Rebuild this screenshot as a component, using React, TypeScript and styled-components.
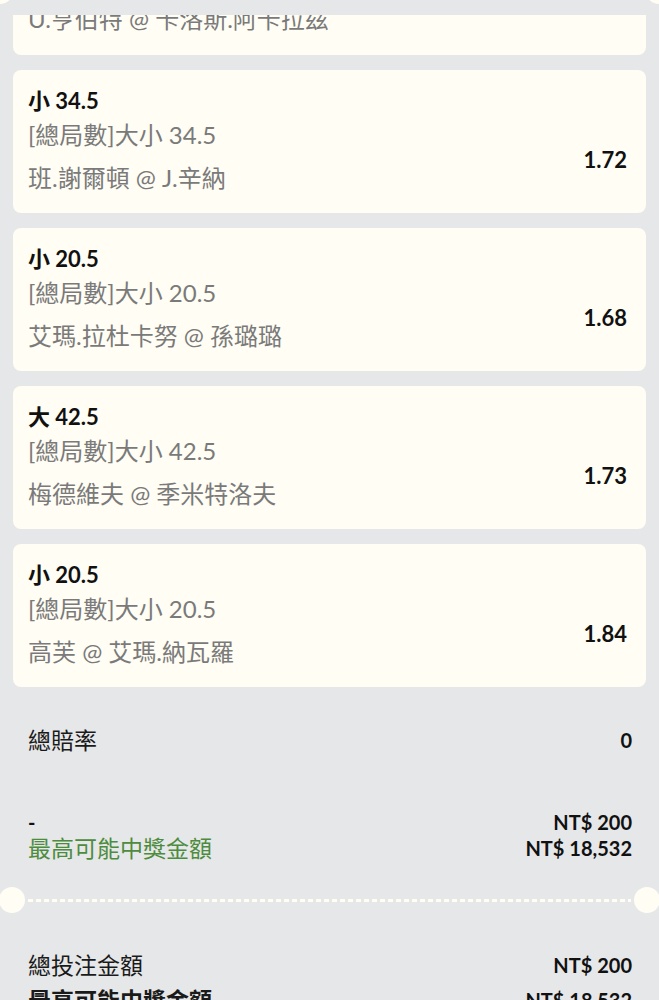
import styled, { createGlobalStyle } from "styled-components";

const GlobalStyle = createGlobalStyle`
  html, body {
    margin: 0;
    padding: 0;
    background: #e6e7e9;
    font-family: Lato, "Noto Sans CJK TC", sans-serif;
  }
`;

const Page = styled.div`
  width: 659px;
  height: 1000px;
  overflow: hidden;
  background: #e6e7e9;
  position: relative;
`;

// 上方的票券缺口列
const TopBand = styled.div`
  position: absolute;
  top: 0;
  left: 0;
  right: 0;
  height: 15px;
  background: #e6e7e9;
  overflow: hidden;
  z-index: 2;
`;

const Notch = styled.div<{ $side: "left" | "right" }>`
  position: absolute;
  top: -22px;
  ${(p) => (p.$side === "left" ? "left: -13px;" : "right: -13px;")}
  width: 26px;
  height: 26px;
  border-radius: 50%;
  background: #fffdf4;
`;

const List = styled.div`
  display: flex;
  flex-direction: column;
  gap: 15px;
  padding: 0 13px;
`;

const ClippedCard = styled.div`
  height: 55px;
  overflow: hidden;
  display: flex;
  flex-direction: column;
  justify-content: flex-end;
  background: #fffdf4;
  border-radius: 0 0 8px 8px;
`;

const Card = styled.div`
  height: 143px;
  box-sizing: border-box;
  background: #fffdf4;
  border-radius: 8px;
  padding: 15px 19px 0 15px;
  display: flex;
  align-items: center;
`;

const Info = styled.div`
  flex: 1;
  display: flex;
  flex-direction: column;
  align-self: flex-start;
`;

const Pick = styled.div`
  font-size: 22px;
  font-weight: 700;
  line-height: 32px;
  color: #111;
`;

const Market = styled.div`
  font-size: 24px;
  line-height: 36px;
  color: #7a7a7a;
`;

const Match = styled.div<{ $tail?: boolean }>`
  margin-top: 8px;
  font-size: 24px;
  line-height: 34px;
  color: #7a7a7a;
  padding: ${(p) => (p.$tail ? "0 15px 19px" : "0")};
`;

const Odds = styled.div`
  font-size: 22px;
  font-weight: 700;
  color: #111;
  margin-top: 20px;
`;

const Summary = styled.div`
  display: flex;
  flex-direction: column;
  padding: 39px 27px 0 28px;
`;

const Row = styled.div<{ $gap?: number }>`
  display: flex;
  justify-content: space-between;
  align-items: center;
  margin-top: ${(p) => p.$gap ?? 0}px;
`;

const Label = styled.div<{ $tone?: "green" | "bold" }>`
  font-size: 23px;
  line-height: 28px;
  color: ${(p) => (p.$tone === "green" ? "#4d8c3d" : "#1a1a1a")};
  font-weight: ${(p) => (p.$tone === "bold" ? 700 : 400)};
`;

const Stack = styled.div<{ $align?: "right" }>`
  display: flex;
  flex-direction: column;
  text-align: ${(p) => p.$align ?? "left"};
`;

const Line = styled.div<{ $tone?: "green" | "bold" }>`
  font-size: ${(p) => (p.$tone === "green" ? 23 : 20)}px;
  line-height: 26px;
  color: ${(p) => (p.$tone === "green" ? "#4d8c3d" : "#111")};
  font-weight: ${(p) => (p.$tone === "bold" ? 700 : 400)};
`;

const Amount = styled.div`
  font-size: 20px;
  line-height: 28px;
  font-weight: 700;
  color: #111;
`;

const Divider = styled.div`
  display: flex;
  align-items: center;
  margin: 26px 0 38px;
`;

const Hole = styled.div<{ $side: "left" | "right" }>`
  width: 26px;
  height: 26px;
  border-radius: 50%;
  background: #fffdf4;
  flex-shrink: 0;
  margin-${(p) => p.$side}: -1px;
`;

const Dashes = styled.div`
  flex: 1;
  height: 3px;
  margin: 0 3px;
  background: repeating-linear-gradient(
    to right,
    #fffdf4 0 5px,
    transparent 5px 8px
  );
`;

const Footer = styled.div`
  display: flex;
  flex-direction: column;
  gap: 7px;
  padding: 0 27px 0 28px;
`;

const bets = [
  { pick: "小 34.5", market: "[總局數]大小 34.5", match: "班.謝爾頓 @ J.辛納", odds: "1.72" },
  { pick: "小 20.5", market: "[總局數]大小 20.5", match: "艾瑪.拉杜卡努 @ 孫璐璐", odds: "1.68" },
  { pick: "大 42.5", market: "[總局數]大小 42.5", match: "梅德維夫 @ 季米特洛夫", odds: "1.73" },
  { pick: "小 20.5", market: "[總局數]大小 20.5", match: "高芙 @ 艾瑪.納瓦羅", odds: "1.84" },
];

export default function App() {
  return (
    <Page>
      <GlobalStyle />
      <TopBand>
        <Notch $side="left" />
        <Notch $side="right" />
      </TopBand>
      <List>
        {/* 被捲出畫面的第一張注單 */}
        <ClippedCard>
          <Match $tail>U.亨伯特 @ 卡洛斯.阿卡拉茲</Match>
        </ClippedCard>
        {bets.map((b, i) => (
          <Card key={i}>
            <Info>
              <Pick>{b.pick}</Pick>
              <Market>{b.market}</Market>
              <Match>{b.match}</Match>
            </Info>
            <Odds>{b.odds}</Odds>
          </Card>
        ))}
      </List>
      <Summary>
        <Row>
          <Label>總賠率</Label>
          <Amount>0</Amount>
        </Row>
        <Row $gap={55}>
          <Stack>
            <Line $tone="bold">-</Line>
            <Line $tone="green">最高可能中獎金額</Line>
          </Stack>
          <Stack $align="right">
            <Line $tone="bold">NT$ 200</Line>
            <Line $tone="bold">NT$ 18,532</Line>
          </Stack>
        </Row>
      </Summary>
      <Divider>
        <Hole $side="left" />
        <Dashes />
        <Hole $side="right" />
      </Divider>
      <Footer>
        <Row>
          <Label>總投注金額</Label>
          <Amount>NT$ 200</Amount>
        </Row>
        <Row>
          <Label $tone="bold">最高可能中獎金額</Label>
          <Amount>NT$ 18,532</Amount>
        </Row>
      </Footer>
    </Page>
  );
}
